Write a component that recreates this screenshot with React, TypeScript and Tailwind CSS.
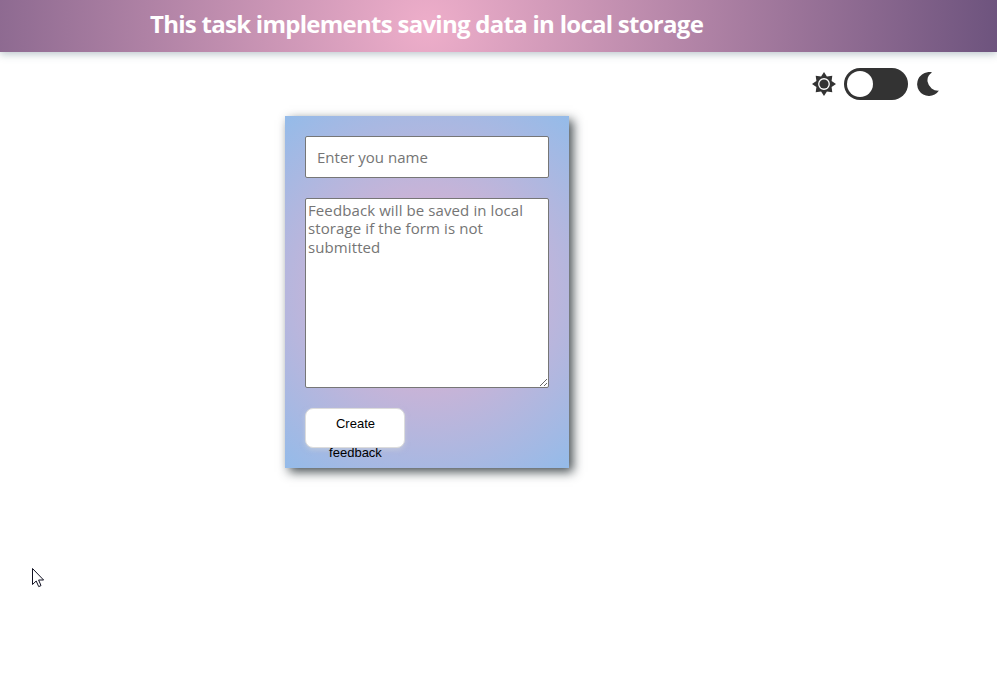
import React from "react";

function SunIcon() {
  return (
    <svg width="24" height="24" viewBox="0 0 24 24" fill="#333">
      <path
        fillRule="evenodd"
        d="M12 0 L14.9 4.4 L20.3 3.7 L19.6 9.1 L24 12 L19.6 14.9 L20.3 20.3 L14.9 19.6 L12 24 L9.1 19.6 L3.7 20.3 L4.4 14.9 L0 12 L4.4 9.1 L3.7 3.7 L9.1 4.4 Z M12 6.1 A5.9 5.9 0 1 0 12 17.9 A5.9 5.9 0 1 0 12 6.1 Z"
      />
      <circle cx="12" cy="12" r="4.6" />
    </svg>
  );
}

function MoonIcon() {
  return (
    <svg width="24" height="24" viewBox="0 0 24 24" fill="#333">
      <path d="M16 0.6 C14.5 0 12.8 0 11.5 0.3 A11.9 11.9 0 1 0 23 18.6 A10.8 10.8 0 0 1 11.6 9.8 C10.9 5.9 12.7 2.4 16 0.6 Z" />
    </svg>
  );
}

function ThemeSwitch() {
  return (
    <div className="flex h-8 items-center gap-2">
      <SunIcon />
      <button className="flex h-8 w-16 items-center rounded-full bg-[#333] pl-[3px]">
        <span className="size-[26px] rounded-full bg-white" />
      </button>
      <MoonIcon />
    </div>
  );
}

export default function App() {
  return (
    <div className="relative h-[675px] w-full overflow-hidden bg-white font-['Open_Sans','Noto_Sans',sans-serif]">
      <header className="flex h-[52px] items-center bg-[radial-gradient(circle_600px_at_427px_26px,rgb(238,174,202),rgb(103,79,122))] pl-[150px] pb-1 shadow-[0_2px_8px_rgba(100,125,135,0.45)]">
        <h1 className="whitespace-nowrap text-2xl font-bold tracking-[-0.73px] text-white">
          This task implements saving data in local storage
        </h1>
      </header>
      <div className="flex justify-end pr-[57px] pt-4">
        <ThemeSwitch />
      </div>
      <form className="ml-[285px] mt-4 flex h-[352px] w-[284px] flex-col items-start gap-5 bg-[radial-gradient(circle,rgb(238,174,202)_0%,rgb(148,187,233)_100%)] p-5 shadow-[4px_4px_10px_rgba(25,35,40,0.8)]">
        <input
          placeholder="Enter you name"
          className="h-[42px] w-[244px] shrink-0 rounded-[2px] border border-[#767676] bg-white px-[11px] text-[15px] placeholder:text-[#757575]"
        />
        <textarea
          placeholder="Feedback will be saved in local storage if the form is not submitted"
          className="h-[190px] w-[244px] shrink-0 rounded-[2px] border border-[#767676] bg-white px-[2px] py-[2px] text-[15px] leading-[18.4px] tracking-[0.1px] placeholder:text-[#757575]"
        />
        <button className="flex h-10 w-[100px] shrink-0 justify-center rounded-lg border border-[#dcdcdc] bg-white pl-[21px] pr-5 font-['Liberation_Sans',sans-serif] text-[13px] leading-[29px] text-black shadow-[0_2px_5px_rgba(213,217,217,0.5)]">
          Create feedback
        </button>
      </form>
      <svg className="absolute left-8 top-[568px]" width="12" height="20" viewBox="0 0 12 20">
        <path
          d="M.5 .5 V16.5 L4.2 13 L6.7 18.6 L9 17.6 L6.6 12 H11.6 Z"
          fill="#fff"
          stroke="#112"
        />
      </svg>
    </div>
  );
}
